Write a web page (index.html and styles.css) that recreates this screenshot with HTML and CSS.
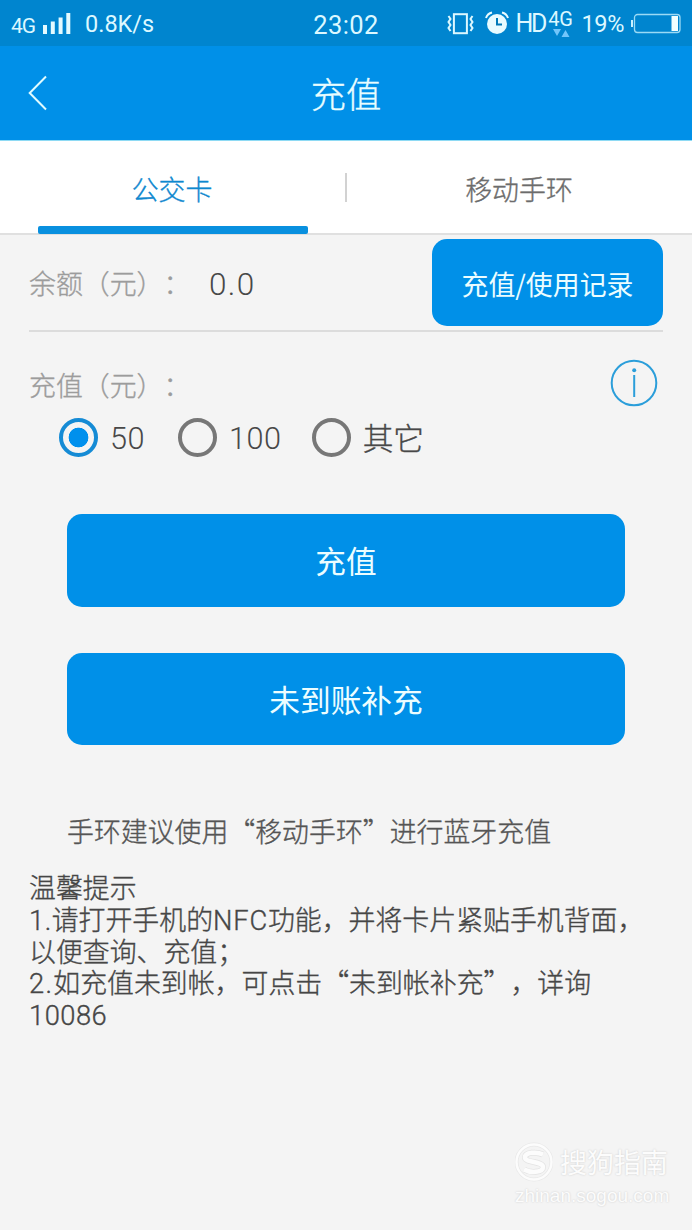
FILE: index.html
```html
<!DOCTYPE html>
<html lang="zh-CN">
<head>
<meta charset="utf-8">
<title>充值</title>
<link rel="stylesheet" href="styles.css">
</head>
<body>
<div class="screen">
  <div class="status">
    <div class="status-left">
      <span class="net">4G</span>
      <svg class="signal" width="28" height="22" viewBox="0 0 28 22" fill="#e4faff"><path d="M0 12h4v9H0zM7.800 8.500h4V21h-4zM15.600 4.500h4V21h-4zM23.300 0h4v21h-4z"/></svg>
      <span class="speed">0.8K/s</span>
    </div>
    <div class="clock">23:02</div>
    <div class="status-right">
      <svg class="vibrate" width="28" height="22" viewBox="0 0 28 22" fill="none" stroke="#dcf8ff"><rect x="6.900" y="1.200" width="13" height="19" stroke-width="2"/><path d="M1.500 3l2 3-2 3 2 3-2 3 2 3M25.500 3l-2 3 2 3-2 3 2 3-2 3" stroke-width="2"/></svg>
      <svg class="alarm" width="24" height="24" viewBox="0 0 24 24"><circle cx="12" cy="13" r="10" fill="#e8fbff"/><path d="M1 7Q2.500 2.500 7 1.500M23 7Q21.500 2.500 17 1.500" fill="none" stroke="#e8fbff" stroke-width="2"/><path d="M12 7v6.500h5" fill="none" stroke="#0079b8" stroke-width="2"/></svg>
      <span class="hd">HD</span>
      <span class="data"><span class="data-label">4G</span><svg width="18" height="8" viewBox="0 0 18 8" fill="#72c5fa"><path d="M1 0h8L5 7zM9.500 8h8l-4-7z"/></svg></span>
      <span class="percent">19%</span>
      <svg class="battery" width="50" height="21" viewBox="0 0 50 21"><rect x="3.500" y="1.500" width="45.500" height="18" rx="3" fill="none" stroke="#9bdaf5" stroke-width="1.300"/><path d="M0 7h2v7H0z" fill="#c8f0ff"/><path d="M40.500 3H47v15h-6.500z" fill="#f2ffff"/></svg>
    </div>
  </div>

  <header class="header">
    <svg class="back" width="20" height="36" viewBox="0 0 20 36" fill="none" stroke="#e0fbff" stroke-width="2"><path d="M18 1.500L1.700 18 18 34.500"/></svg>
    <h1 class="title">充值</h1>
  </header>

  <nav class="tabs">
    <div class="tab tab-active">公交卡</div>
    <div class="tab">移动手环</div>
    <div class="tab-divider"></div>
  </nav>

  <main class="content">
    <section class="balance">
      <span class="label">余额（元）：</span>
      <span class="amount">0.0</span>
      <button class="button history">充值/使用记录</button>
    </section>

    <section class="recharge">
      <span class="label">充值（元）：</span>
      <svg class="info" width="48" height="48" viewBox="0 0 48 48"><circle cx="24" cy="24" r="22.300" fill="none" stroke="#2b9eda" stroke-width="2"/><circle cx="24.200" cy="11.200" r="2" fill="#2b9eda"/><path d="M24.200 16v22" stroke="#2b9eda" stroke-width="2"/></svg>
    </section>

    <div class="options">
      <div class="option"><span class="radio radio-on"></span><span class="latin">50</span></div>
      <div class="option"><span class="radio"></span><span class="latin">100</span></div>
      <div class="option"><span class="radio"></span><span class="other">其它</span></div>
    </div>

    <div class="actions">
      <button class="button action">充值</button>
      <button class="button action">未到账补充</button>
    </div>

    <p class="advice">手环建议使用“移动手环”进行蓝牙充值</p>

    <div class="tips">
      <div>温馨提示</div>
      <div><span class="latin">1.</span>请打开手机的<span class="latin nfc">NFC</span>功能，并将卡片紧贴手机背面，</div>
      <div>以便查询、充值；</div>
      <div><span class="latin second">2.</span>如充值未到帐，可点击“未到帐补充”，详询</div>
      <div><span class="latin">10086</span></div>
    </div>
  </main>

  <footer class="watermark">
    <div class="brand">
      <svg width="38" height="40" viewBox="0 0 38 40" fill="none"><circle cx="19" cy="20" r="17.500" stroke="#e8e8e8" stroke-width="4"/><circle cx="19" cy="20" r="17.500" stroke="#fcfcfc" stroke-width="2.500"/><path d="M28 12.500C22 9.500 10 10 10 15.500s18 3.500 18 9.500-13 6-19 2.500" stroke="#e3e3e3" stroke-width="6"/><path d="M28 12.500C22 9.500 10 10 10 15.500s18 3.500 18 9.500-13 6-19 2.500" stroke="#fcfcfc" stroke-width="4.500"/></svg>
      <span class="brand-name">搜狗指南</span>
    </div>
    <div class="site">zhinan.sogou.com</div>
  </footer>
</div>
</body>
</html>
```

FILE: styles.css
```css
* { box-sizing: border-box; }

body {
  margin: 0;
  background: #f4f4f4;
  font-family: "Noto Sans CJK SC", sans-serif;
  color: #484848;
  text-spacing-trim: space-all;
}

.screen {
  display: flex;
  flex-direction: column;
  width: 692px;
  height: 1230px;
  overflow: hidden;
}

.status {
  display: grid;
  grid-template-columns: 1fr auto 1fr;
  align-items: center;
  height: 46px;
  flex: none;
  padding: 2px 11px 0;
  background: #0085cf;
  color: #dcf8ff;
  font-family: Roboto, sans-serif;
  font-size: 24px;
  line-height: 28px;
}

.status-left, .status-right { display: flex; align-items: center; }
.status-right { justify-content: flex-end; }
.net { font-size: 21px; width: 26px; margin-top: 3px; letter-spacing: -1px; }
.signal { margin-left: 6px; margin-top: -1px; }
.speed { margin-left: 14px; font-size: 23.500px; letter-spacing: 0; }
.clock { font-size: 25.500px; letter-spacing: 0.400px; margin-top: 1px; }
.vibrate { margin-right: 10px; flex: none; margin-left: -4px; }
.alarm { margin-right: 7px; flex: none; margin-top: -2px; }
.hd { font-size: 25px; width: 29px; letter-spacing: -2.500px; margin-right: 3px; }
.data { display: flex; flex-direction: column; align-items: center; width: 26px; height: 30px; margin-right: 8px; }
.data-label { font-size: 20px; line-height: 21px; }
.data svg { flex: none; margin-top: -1px; }
.percent { font-size: 23.500px; letter-spacing: -0.400px; margin-right: 7px; white-space: nowrap; }
.battery { flex: none; margin-top: -2px; }

.header {
  display: grid;
  grid-template-columns: 60px 1fr 60px;
  align-items: center;
  height: 94px;
  flex: none;
  background: #0090e8;
}
.back { margin-left: 28px; }
.title {
  margin: 0;
  text-align: center;
  font-size: 35.300px;
  font-weight: 300;
  line-height: 50px;
  color: #e8fdff;
}
.title, .tab, .label, .other, .advice, .tips { -webkit-text-stroke: 0.350px currentColor; }

.tabs {
  position: relative;
  display: grid;
  grid-template-columns: 1fr 1fr;
  height: 95px;
  flex: none;
  background: #fff;
  border-top: 1px solid #8edaf4;
  border-bottom: 2px solid #e0e0e0;
}
.tab {
  margin: 0 38px;
  font-size: 26.900px;
  line-height: 95px;
  height: 92px;
  text-align: center;
  color: #6c6c6c;
  font-weight: 300;
}
.tab-active { color: #0e88cf; text-indent: -2px; }
.tab-active::after {
  content: "";
  position: absolute;
  left: 38px;
  bottom: -1px;
  width: 270px;
  height: 8px;
  border-radius: 2px;
  background: #0990df;
}
.tab-divider { position: absolute; left: 345px; top: 32px; width: 2px; height: 29px; background: #d2d2d2; }

.content { display: flex; flex-direction: column; padding: 0 29px; }

.balance {
  display: flex;
  align-items: center;
  height: 97px;
  border-bottom: 2px solid #dcdcdc;
}
.label { width: 180px; padding-top: 1px; font-size: 26.900px; line-height: 40px; color: #9c9c9c; font-weight: 300; white-space: nowrap; }
.amount { font-family: Roboto, sans-serif; font-size: 31.500px; font-weight: 350; letter-spacing: 1.400px; flex: 1; padding-top: 3px; }

.button {
  padding: 0;
  border: 0;
  background: #0090e8;
  color: #ecfdff;
  font-family: "Noto Sans CJK SC", sans-serif;
  font-weight: 400;
}
.history { width: 231px; height: 87px; border-radius: 15px; font-size: 26.900px; margin-top: -1px; padding-top: 2px; }

.recharge { display: flex; justify-content: space-between; align-items: center; height: 78px; padding-top: 26px; padding-right: 5px; }
.info { flex: none; margin-top: -2px; }

.options { display: flex; height: 60px; align-items: center; padding-left: 30px; padding-bottom: 6px; font-size: 30.700px; line-height: 44px; }
.option { display: flex; align-items: center; gap: 12px; height: 44px; margin-right: 33px; }
.option + .option { margin-right: 30px; }
.latin { font-family: Roboto, sans-serif; line-height: 1; letter-spacing: 0.500px; }
.option .latin { padding-top: 5px; font-weight: 350; }
.other { font-weight: 300; }
.radio {
  width: 39px;
  height: 39px;
  border: 4.500px solid #777;
  border-radius: 50%;
}
.radio-on { border-color: #158bd5; background: radial-gradient(circle, #0090ed 9.500px, transparent 10.200px); }

.actions { display: flex; flex-direction: column; gap: 46px; padding: 44px 38px 0; }
.action { height: 92.500px; border-radius: 15px; font-size: 30.700px; padding-bottom: 1px; }

.advice { margin: 66px 0 0 38px; font-size: 26.900px; line-height: 40px; color: #555; font-weight: 300; white-space: nowrap; }

.tips { margin-top: 20px; font-size: 26.900px; font-weight: 300; line-height: 31.800px; white-space: nowrap; color: #464646; }
.tips > div { height: 31.800px; }
.tips .latin { font-size: 27.300px; font-weight: 300; }
.nfc { letter-spacing: 0.800px; }
.tips .second { letter-spacing: 1.300px; }

.watermark { margin-top: auto; width: 154px; margin-left: 515px; height: 91px; color: #fcfcfc; text-shadow: 0 0 2px #c8c8c8; }
.brand { display: flex; align-items: center; gap: 7px; height: 46px; }
.brand svg { flex: none; }
.brand-name { font-size: 27px; line-height: 40px; white-space: nowrap; }
.site { font-family: "Liberation Sans", sans-serif; font-size: 19px; line-height: 22px; white-space: nowrap; }
```
